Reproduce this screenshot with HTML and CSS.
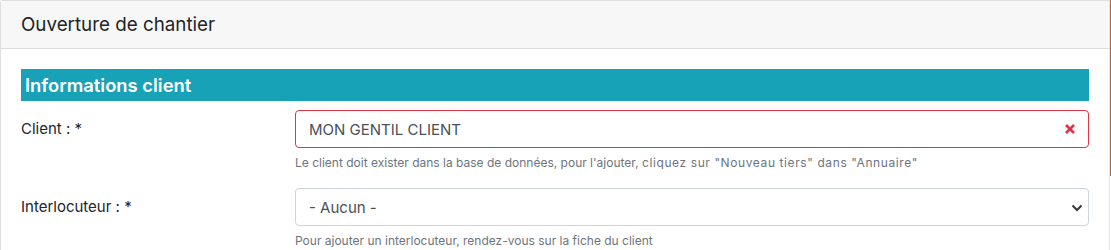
FILE: index.html
```html
<!DOCTYPE html>
<html lang="fr">
<head>
    <meta charset="UTF-8">
    <meta name="viewport" content="width=device-width, initial-scale=1.0">
    <title>Ouverture de chantier</title>
    <link rel="stylesheet" href="styles.css">
</head>
<body>
    <div class="page">
        <div class="card">
            <div class="card-header">
                <h5>Ouverture de chantier</h5>
            </div>
            <div class="card-body">
                <!-- Client info -->
                <h5 class="section-title">Informations client</h5>
                <div class="form-row">
                    <label class="form-label" for="client">Client : *</label>
                    <div class="form-field">
                        <div class="input-wrap">
                            <input type="text" id="client" class="form-control is-invalid" value="MON GENTIL CLIENT">
                            <svg class="clear-icon" width="12" height="12" viewBox="0 0 12 12">
                                <path d="M2 2 L10 10 M10 2 L2 10" stroke="#dc3545" stroke-width="2.6" stroke-linecap="butt"/>
                            </svg>
                        </div>
                        <small class="form-text">Le client doit exister dans la base de données, pour l'ajouter, <span class="wide">cliquez sur "Nouveau tiers" dans "Annuaire"</span></small>
                    </div>
                </div>
                <div class="form-row">
                    <label class="form-label" for="interlocuteur">Interlocuteur : *</label>
                    <div class="form-field">
                        <div class="input-wrap">
                            <select id="interlocuteur" class="form-control">
                                <option>- Aucun -</option>
                            </select>
                            <svg class="chevron" width="12" height="8" viewBox="0 0 12 8">
                                <path d="M1.5 1.5 L6 6 L10.5 1.5" fill="none" stroke="#343a40" stroke-width="2"/>
                            </svg>
                        </div>
                        <small class="form-text">Pour ajouter un interlocuteur, rendez-vous sur la fiche du client</small>
                    </div>
                </div>
            </div>
        </div>
        <div class="edge"></div>
    </div>
</body>
</html>
```

FILE: styles.css
```css
body {
    font-family: Inter, "Liberation Sans", Arial, sans-serif;
    color: #212529;
    background-color: #fff;
    margin: 0;
    padding: 0;
}
.page {
    display: flex;
    align-items: flex-start;
}
.card {
    width: 1110px;
    border: 1px solid #dfdfdf;
    border-right-color: #e4e4e4;
    box-sizing: border-box;
    border-radius: 3px 0 0 0;
}
.edge {
    width: 1px;
    height: 176px;
    background-color: #c4622d;
}
.card-header {
    background-color: #f7f7f7;
    border-bottom: 1px solid #dcdcdc;
    padding: 12px 20px;
}
.card-header h5 {
    margin: 0;
    font-size: 18.8px;
    font-weight: 400;
    line-height: 23px;
}
.card-body {
    padding: 20px;
}
.section-title {
    margin: 0 0 9px 0;
    background-color: #17a2b8;
    color: #fff;
    font-size: 18.4px;
    font-weight: 600;
    line-height: 32px;
    padding: 0 4px;
}
.form-row {
    display: flex;
    margin-bottom: 16px;
}
.form-label {
    width: 274px;
    flex-shrink: 0;
    font-size: 15px;
    line-height: 24px;
    padding-top: 7px;
}
.form-field {
    flex: 1;
}
.input-wrap {
    position: relative;
}
.form-control {
    display: block;
    width: 100%;
    box-sizing: border-box;
    height: 38px;
    padding: 6px 13px;
    font-family: inherit;
    font-size: 15px;
    color: #495057;
    background-color: #fff;
    border: 1px solid #ced4da;
    border-radius: 4px;
    -webkit-appearance: none;
    appearance: none;
}
.form-control.is-invalid {
    border-color: #dc3545;
}
select.form-control {
    padding-left: 13px;
}
.clear-icon {
    position: absolute;
    right: 13px;
    top: 13px;
}
.chevron {
    position: absolute;
    right: 6px;
    top: 16px;
}
.form-text {
    display: block;
    margin-top: 5px;
    font-size: 12px;
    line-height: 19px;
    color: #6c757d;
}
.wide {
    letter-spacing: 0.6px;
}
```
